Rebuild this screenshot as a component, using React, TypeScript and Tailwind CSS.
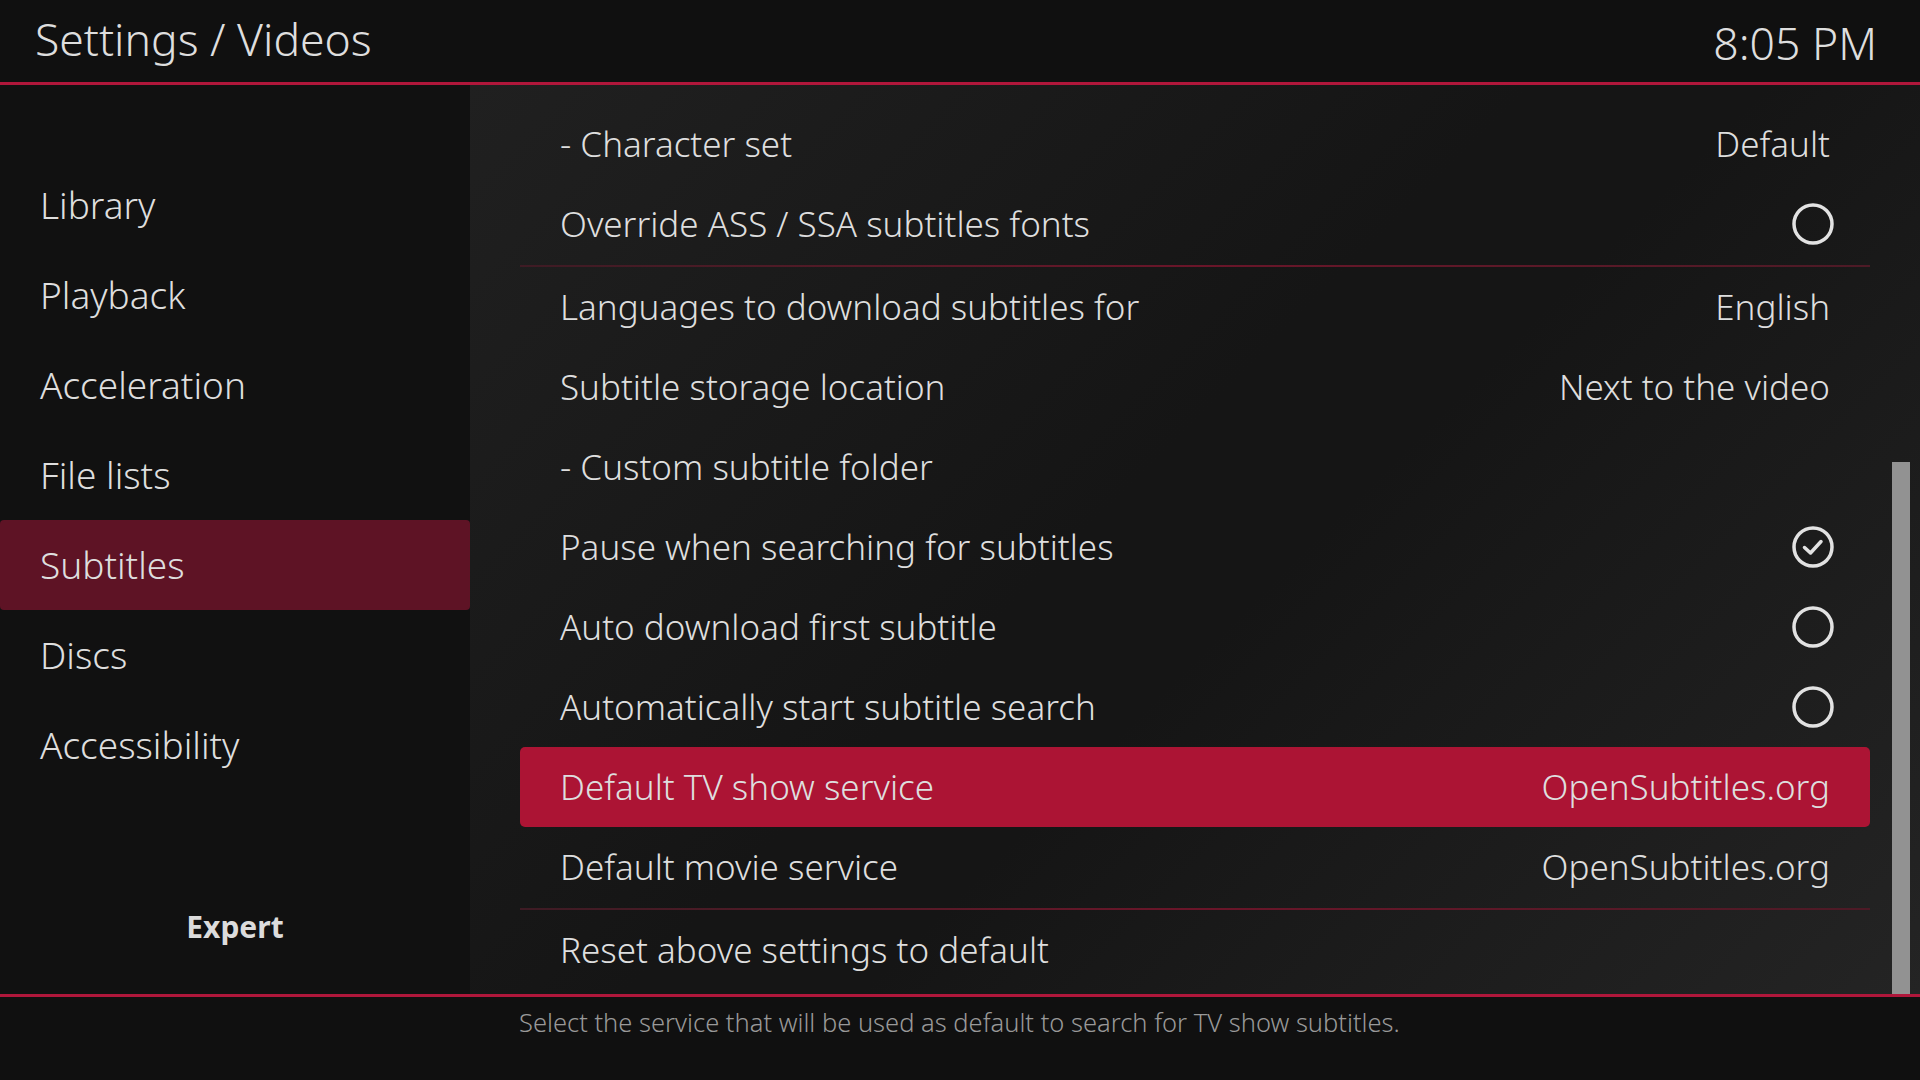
import { Fragment } from "react"

type Row = {
    label: string
    value?: string
    toggle?: "on" | "off"
    focused?: boolean
    separatorAfter?: boolean
}

const menu = ["Library", "Playback", "Acceleration", "File lists", "Subtitles", "Discs", "Accessibility"]

const rows: Row[] = [
    { label: "- Character set", value: "Default" },
    { label: "Override ASS / SSA subtitles fonts", toggle: "off", separatorAfter: true },
    { label: "Languages to download subtitles for", value: "English" },
    { label: "Subtitle storage location", value: "Next to the video" },
    { label: "- Custom subtitle folder" },
    { label: "Pause when searching for subtitles", toggle: "on" },
    { label: "Auto download first subtitle", toggle: "off" },
    { label: "Automatically start subtitle search", toggle: "off" },
    { label: "Default TV show service", value: "OpenSubtitles.org", focused: true },
    { label: "Default movie service", value: "OpenSubtitles.org", separatorAfter: true },
    { label: "Reset above settings to default" },
]

function Radio({ checked }: { checked: boolean }) {
    return (
        <svg width="44" height="44" viewBox="0 0 44 44" className="mr-[-5px]">
            <circle cx="22" cy="22" r="19" fill="none" stroke="#e2e2e2" strokeWidth="3.5" />
            {checked && (
                <path d="M13.5 22.5 L19.5 28 L30 16.5" fill="none" stroke="#e2e2e2" strokeWidth="3.5" strokeLinecap="round" strokeLinejoin="round" />
            )}
        </svg>
    )
}

export default function App() {
    return (
        <div className="w-[1920px] h-[1080px] bg-[#101010] flex flex-col overflow-hidden text-[#dedede] font-light" style={{ fontFamily: '"Noto Sans", "Open Sans", sans-serif' }}>
            {/* header */}
            <div className="h-[82px] flex items-center justify-between pl-[35px] pr-[43px] shrink-0">
                <span className="text-[44.5px] leading-[60px] pb-[4px]">Settings / Videos</span>
                <span className="text-[44.5px] leading-[60px] pt-[4px]">8:05 PM</span>
            </div>
            <div className="h-[3px] bg-[#b0173b] shrink-0" />

            <div className="flex flex-1 min-h-0">
                {/* sidebar */}
                <div className="w-[470px] bg-[#111111] flex flex-col pt-[75px] shrink-0">
                    {menu.map((m) => (
                        <div
                            key={m}
                            className={
                                "h-[90px] flex items-center pl-[40px] text-[37px] rounded-[4px] " +
                                (m === "Subtitles" ? "bg-[#5e1325]" : "")
                            }
                        >
                            {m}
                        </div>
                    ))}
                    <div className="mt-auto pb-[47px] text-center text-[30px] leading-[40px] font-bold text-[#dcdcdc]">Expert</div>
                </div>

                {/* settings list */}
                <div className="flex-1 flex bg-[linear-gradient(135deg,#202020_0%,#151515_45%,#151515_55%,#242424_100%)]">
                    <div className="w-[1350px] ml-[50px] pt-[19px] flex flex-col">
                        {rows.map((r) => (
                            <Fragment key={r.label}>
                                <div
                                    className={
                                        "h-[80px] shrink-0 flex items-center justify-between px-[40px] text-[35px] rounded-[5px] " +
                                        (r.focused ? "bg-[#ac1434]" : "")
                                    }
                                >
                                    <span>{r.label}</span>
                                    {r.value && <span>{r.value}</span>}
                                    {r.toggle && <Radio checked={r.toggle === "on"} />}
                                </div>
                                {r.separatorAfter && (
                                    <div className="h-[3px] shrink-0 flex items-center">
                                        <div className="h-[2px] w-full bg-gradient-to-r from-[#3e1b24] via-[#6a1529] to-[#4d1a26]" />
                                    </div>
                                )}
                            </Fragment>
                        ))}
                    </div>
                    <div className="ml-[22px] w-[18px] flex flex-col justify-end">
                        <div className="h-[532px] bg-[#929292]" />
                    </div>
                </div>
            </div>

            {/* footer */}
            <div className="h-[3px] bg-[#b0173b] shrink-0" />
            <div className="h-[83px] shrink-0 pl-[519px] pt-[8px]">
                <span className="text-[25.5px] leading-[34px] text-[#999999]">
                    Select the service that will be used as default to search for TV show subtitles.
                </span>
            </div>
        </div>
    )
}
